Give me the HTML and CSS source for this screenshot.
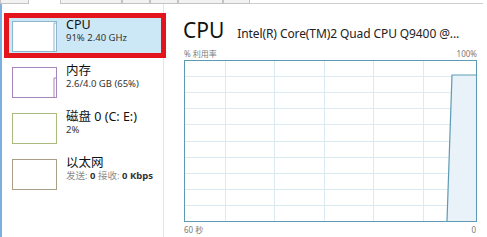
FILE: index.html
```html
<!DOCTYPE html>
<html lang="zh">
<head>
<meta charset="utf-8">
<title>任务管理器 - 性能</title>
<link rel="stylesheet" href="styles.css">
</head>
<body>
<div class="tabs">
  <div class="tab t1"></div>
  <div class="tab sel t2"></div>
  <div class="tab t3"></div>
  <div class="tab t4"></div>
  <div class="tab t5"></div>
  <div class="tab t6"></div>
  <div class="tab t7"></div>
  <div class="tabline"></div>
</div>
<div class="main">
  <div class="sidebar">
    <div class="item selected">
      <div class="thumb cpu">
        <svg width="44" height="29" viewBox="0 0 44 29"><polyline points="41,29 41,1 44,1" fill="none" stroke="#8cb6cc" stroke-width="1"/></svg>
      </div>
      <div class="info">
        <div class="name">CPU</div>
        <div class="sub">91% 2.40 GHz</div>
      </div>
    </div>
    <div class="item">
      <div class="thumb mem">
        <svg width="44" height="29" viewBox="0 0 44 29"><polyline points="41,29 41,10 44,10" fill="none" stroke="#a785bd" stroke-width="1"/></svg>
      </div>
      <div class="info">
        <div class="name">内存</div>
        <div class="sub">2.6/4.0 GB (65%)</div>
      </div>
    </div>
    <div class="item">
      <div class="thumb disk"></div>
      <div class="info">
        <div class="name">磁盘 0 (C: E:)</div>
        <div class="sub">2%</div>
      </div>
    </div>
    <div class="item">
      <div class="thumb net"></div>
      <div class="info">
        <div class="name">以太网</div>
        <div class="sub"><span class="lbl">发送:</span> <b>0</b> <span class="lbl">接收:</span> <b>0 Kbps</b></div>
      </div>
    </div>
  </div>
  <div class="panel">
    <div class="head">
      <div class="big">CPU</div>
      <div class="model">Intel(R) Core(TM)2 Quad CPU Q9400 @...</div>
    </div>
    <div class="axis top"><span>% 利用率</span><span>100%</span></div>
    <div class="graph">
      <svg width="291" height="160" viewBox="0 0 291 160">
        <g stroke="#dcebf1" stroke-width="1">
          <line x1="40.5" y1="0" x2="40.5" y2="160"/>
          <line x1="89.5" y1="0" x2="89.5" y2="160"/>
          <line x1="139.5" y1="0" x2="139.5" y2="160"/>
          <line x1="188.5" y1="0" x2="188.5" y2="160"/>
          <line x1="238.5" y1="0" x2="238.5" y2="160"/>
          <line x1="0" y1="15.5" x2="291" y2="15.5"/>
          <line x1="0" y1="31.5" x2="291" y2="31.5"/>
          <line x1="0" y1="47.5" x2="291" y2="47.5"/>
          <line x1="0" y1="63.5" x2="291" y2="63.5"/>
          <line x1="0" y1="80.5" x2="291" y2="80.5"/>
          <line x1="0" y1="96.5" x2="291" y2="96.5"/>
          <line x1="0" y1="112.5" x2="291" y2="112.5"/>
          <line x1="0" y1="128.5" x2="291" y2="128.5"/>
          <line x1="0" y1="144.5" x2="291" y2="144.5"/>
        </g>
        <polygon points="262,160 267,14 291,14 291,160" fill="#e9f2f9"/>
        <polyline points="262,160 267,14 291,14" fill="none" stroke="#5c9bb3" stroke-width="1.2"/>
      </svg>
    </div>
    <div class="axis bottom"><span>60 秒</span><span>0</span></div>
  </div>
</div>
</body>
</html>
```
FILE: styles.css
```css
html, body {
  margin: 0;
  padding: 0;
  background: #ffffff;
}
body {
  width: 487px;
  height: 237px;
  overflow: hidden;
  font-family: "Noto Sans", "Noto Sans CJK SC", sans-serif;
  color: #1a1a1a;
}
.tabs {
  display: flex;
  height: 4px;
  position: relative;
}
.tab {
  box-sizing: border-box;
  height: 4px;
  background: #f2f2f2;
  border: 1px solid #c3c3c3;
  border-top: none;
}
.tab.sel {
  background: #ffffff;
  border: none;
}
.t1 { width: 29px; }
.t2 { width: 31px; }
.t3 { width: 62px; }
.t4 { width: 28px; }
.t5 { width: 28px; }
.t6 { width: 45px; }
.t7 { width: 27px; }
.tabline {
  flex: 1;
  height: 4px;
  border-bottom: 1px solid #cfcfcf;
  box-sizing: border-box;
  margin-right: 4px;
}
.main {
  display: flex;
  height: 233px;
}
.sidebar {
  box-sizing: border-box;
  width: 164px;
  flex: none;
  border-left: 2px solid #7daee0;
  border-right: 1px solid #e4e4e4;
  padding-top: 9px;
  display: flex;
  flex-direction: column;
  gap: 1px;
}
.item {
  box-sizing: border-box;
  width: 162px;
  height: 45px;
  margin-left: 2px;
  padding-left: 8px;
  display: flex;
  align-items: flex-start;
  gap: 9px;
  flex: none;
}
.item.selected {
  background: #cce8f6;
  box-shadow: inset 0 0 0 5px #e3141b;
}
.thumb {
  box-sizing: border-box;
  width: 45px;
  height: 31px;
  margin-top: 8px;
  background: #ffffff;
  border: 1px solid #999;
  flex: none;
  overflow: hidden;
}
.thumb svg { display: block; }
.thumb.cpu { border-color: #8cb6cc; }
.thumb.mem { border-color: #a785bd; }
.thumb.disk { border-color: #abbb7d; }
.thumb.net { border-color: #a99f86; }
.info {
  padding-top: 4px;
  white-space: nowrap;
}
.name {
  font-size: 12.5px;
  line-height: 15px;
  color: #111;
}
.sub {
  font-size: 9.5px;
  line-height: 12px;
  color: #333;
}
.sub .lbl { color: #8c8c8c; }
.sub b { font-weight: 700; color: #333; }
.panel {
  flex: 1;
  padding: 14px 10px 0 20px;
  display: flex;
  flex-direction: column;
}
.head {
  display: flex;
  align-items: baseline;
  gap: 13px;
  white-space: nowrap;
  height: 28px;
}
.big {
  font-size: 21px;
  line-height: 24px;
  color: #111;
  margin-left: -1px;
}
.model {
  font-size: 12px;
  line-height: 15px;
  color: #222;
  letter-spacing: -0.1px;
}
.axis {
  display: flex;
  justify-content: space-between;
  font-size: 8px;
  color: #7a7a7a;
  line-height: 10px;
}
.axis.top {
  margin-top: 1px;
  height: 13px;
  align-items: center;
}
.axis.bottom {
  margin-top: 3px;
  padding-right: 1px;
}
.graph {
  box-sizing: border-box;
  width: 293px;
  height: 162px;
  border: 1px solid #5c9bb3;
  background: #ffffff;
}
.graph svg { display: block; }
```
